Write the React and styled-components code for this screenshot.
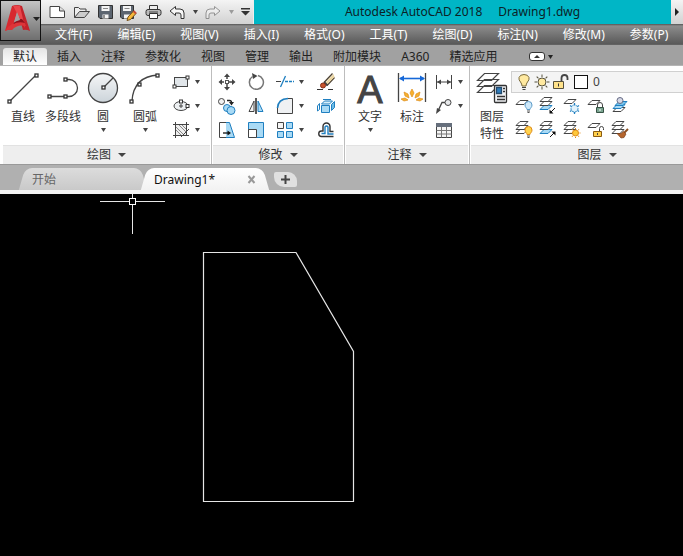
import React, { useState } from 'react';
import styled, { createGlobalStyle } from 'styled-components';

const GlobalStyle = createGlobalStyle`
  * {
    box-sizing: border-box;
  }

  body {
    margin: 0;
    background: #000;
    font-family: "Noto Sans", "Noto Sans CJK SC", sans-serif;
    font-size: 12px;
    line-height: 16px;
    color: #333;
  }

  button, select {
    font: inherit;
    color: inherit;
    background: none;
    border: 0;
    padding: 0;
    margin: 0;
    cursor: pointer;
  }

  svg {
    display: block;
    flex: none;
  }
`

const Container = styled.div`
  min-height: 100vh;
  display: flex;
  flex-direction: column;
  overflow: hidden;
`

const Header = styled.header`
  display: flex;
  height: 45px;
  background: linear-gradient(#555 24px, #8c8c8c 26px, #595959 44px, #6b6b6b);
`

const AppButton = styled.button`
  width: 41px;
  height: 41px;
  flex: none;
  display: flex;
  align-items: center;
  gap: 1px;
  padding: 0 0 4px 3px;
  border: 1px solid #111;
  background: linear-gradient(#c4c4c4, #969696 50%, #6f6f6f);
`

const HeaderRows = styled.div`
  flex: 1;
  min-width: 0;
`

const TopRow = styled.div`
  display: flex;
  height: 24px;
`

const QuickBar = styled.div`
  width: 213px;
  flex: none;
  display: flex;
  align-items: center;
  justify-content: space-between;
  padding: 0 3px 0 8px;
  background: linear-gradient(#f4f4f4, #d2d2d2);
  border-right: 1px solid #eee;
`

const QuickButton = styled.button`
  display: flex;
  align-items: center;
  opacity: ${props => props.$dim ? 0.45 : 1};
`

const TitleBar = styled.h1`
  flex: 1;
  margin: 0;
  display: flex;
  align-items: center;
  justify-content: center;
  gap: 16px;
  font-size: 12px;
  font-weight: normal;
  color: #0c2226;
  white-space: nowrap;
  background: #00b6c6;
`

const TitleArrow = styled.button`
  width: 12px;
  display: flex;
  align-items: center;
  justify-content: center;
  background: linear-gradient(#f4f4f4, #d2d2d2);
`

const MenuBar = styled.nav`
  display: flex;
  align-items: center;
  gap: 25px;
  height: 21px;
  padding-left: 14px;
  overflow: hidden;
`

const MenuItem = styled.button`
  flex: none;
  color: #fff;
  white-space: nowrap;
`

const RibbonTabs = styled.div`
  display: flex;
  align-items: flex-end;
  height: 20px;
  padding-left: 3px;
  background: #a1a1a1;
`

const RibbonTab = styled.button`
  height: 17px;
  padding: 0 10px;
  line-height: 17px;
  white-space: nowrap;
  border-radius: 3px 3px 0 0;
  color: #222;
  background: ${props => props.$active ? 'linear-gradient(#e4e4e4, #fff)' : 'none'};
`

const RibbonToggle = styled.button`
  height: 17px;
  margin-left: 22px;
  display: flex;
  align-items: center;
  gap: 3px;
`

const Ribbon = styled.section`
  display: flex;
  height: 100px;
  padding-left: 2px;
  overflow: hidden;
  background: #fff;
  border-top: 1px solid #b5b5b5;
  border-bottom: 1px solid #999;
`

const Panel = styled.div`
  width: ${props => props.$width}px;
  flex: none;
  display: flex;
  flex-direction: column;
  border-right: 1px solid #bdbdbd;
`

const PanelBody = styled.div`
  flex: 1;
  display: flex;
  align-items: flex-start;
  padding: 4px 0 0 ${props => props.$left}px;
`

const PanelTitle = styled.button`
  height: 19px;
  margin: 0 1px;
  display: flex;
  align-items: center;
  justify-content: center;
  gap: 7px;
  background: #eee;
  border-top: 1px solid #e2e2e2;
`

const BigButton = styled.button`
  width: ${props => props.$width || 40}px;
  display: flex;
  flex-direction: column;
  align-items: center;
  gap: 3px;
  padding-top: 2px;
  line-height: 17px;
  white-space: nowrap;

  span {
    padding-top: 1px;
  }
`

const ToolGrid = styled.div`
  display: grid;
  grid-template-columns: ${props => props.$columns};
  grid-auto-rows: 24px;
  margin-left: ${props => props.$indent || 0}px;
`

const Tool = styled.div`
  display: flex;
  align-items: center;
  gap: 4px;
`

const IconButton = styled.button`
  display: flex;
  align-items: center;
`

const LayerColumn = styled.div`
  flex: 1;
`

const LayerBox = styled.div`
  display: flex;
  align-items: center;
  height: 22px;
  margin: 1px 0;
  padding-left: 3px;
  border: 1px solid #d0d0d0;
  border-right: 0;
  background: #f4f4f4;
`

const Swatch = styled.span`
  width: 14px;
  height: 14px;
  margin: 0 5px 0 4px;
  border: 1px solid #111;
  background: #fff;
`

const LayerSelect = styled.select`
  flex: 1;
  appearance: none;
  outline: none;
  color: #444;
`

const FileTabs = styled.div`
  display: flex;
  align-items: flex-end;
  height: 29px;
  padding: 0 0 4px 22px;
  background: linear-gradient(#b0b0b0 25px, #f2f2f2 25px);
`

const FileTab = styled.div`
  position: relative;
  z-index: ${props => props.$active ? 1 : 0};
  width: 122px;
  height: 22px;
  display: flex;
  align-items: center;
  justify-content: space-between;
  padding: 1px 10px 0 10px;
  color: ${props => props.$active ? '#111' : '#666'};

  &::before, &::after {
    content: "";
    position: absolute;
    z-index: -1;
    top: 0;
    bottom: 0;
    background: ${props => props.$active ? 'linear-gradient(#fff, #f2f2f2)' : 'linear-gradient(#dcdcdc, #c9c9c9)'};
  }

  &::before {
    left: 0;
    right: 40%;
    border-radius: 7px 0 0 0;
    transform: skewX(-16deg);
  }

  &::after {
    left: 40%;
    right: 0;
    border-radius: 0 7px 0 0;
    transform: skewX(16deg);
  }
`

const AddTab = styled.button`
  width: 23px;
  height: 15px;
  margin: 0 0 3px 8px;
  display: flex;
  align-items: center;
  justify-content: center;
  border-radius: 2px 9px 2px 10px;
  background: #e0e0e0;
`

const Workspace = styled.main`
  flex: 1;
  display: flex;
  min-height: 320px;
  background: #000;
`

const Drawing = styled.svg`
  width: 100%;
  height: auto;
`

const INK = '#444';
const BLUE = '#1f7fc0';
const SKY = '#a9daf5';

function Caret({ size = 5, color = '#444' }) {
    return (
        <svg width={size} height="4" viewBox="0 0 6 4" preserveAspectRatio="none">
            <path d="M0 0h6L3 4z" fill={color} />
        </svg>
    )
}

// small square grip with its centre on x, y
function Grip({ x, y }) {
    return <rect x={x - 1.5} y={y - 1.5} width="3" height="3" fill="#fff" stroke="#333" />
}

function Big({ children }) {
    return (
        <svg width="36" height="32" viewBox="0 0 36 32" fill="none" stroke={INK} strokeWidth="1.3">
            {children}
        </svg>
    )
}

function Small({ children }) {
    return (
        <svg width="20" height="20" viewBox="0 0 20 20" fill="none" stroke={INK}>
            {children}
        </svg>
    )
}

// one sheet of the layer stack
function Sheet({ x = 0, y = 0, fill = '#fff', stroke = INK }) {
    return <path d={`M${x + 2} ${y + 4.5}L${x + 6} ${y + 0.5}h8l-4 4z`} fill={fill} stroke={stroke} />
}

function Stack({ bottom = '#fff', bottomStroke = INK }) {
    return (
        <g>
            <Sheet y={9} fill={bottom} stroke={bottomStroke} />
            <Sheet y={5} />
            <Sheet y={1} />
        </g>
    )
}

function Bulb({ x, y, fill, stroke }) {
    return (
        <g transform={`translate(${x} ${y})`}>
            <path d="M-1.500 3.500C-1.500 2-3.500 1.500-3.500-1a3.500 3.500 0 0 1 7 0C3.500 1.500 1.500 2 1.500 3.500z" fill={fill} stroke={stroke} />
            <path d="M-1.500 5h3M-1 6.500h2" stroke="#555" />
        </g>
    )
}

function Sun({ x, y, r, fill, stroke, ray }) {
    const rays = [0, 45, 90, 135, 180, 225, 270, 315];
    return (
        <g transform={`translate(${x} ${y})`} stroke={stroke}>
            {rays.map(a => <path key={a} d={`M0 ${-r - 1}V${-r - ray}`} transform={`rotate(${a})`} />)}
            <circle r={r} fill={fill} />
        </g>
    )
}

const quickIcons = [
    { name: '新建', icon: <svg width="17" height="16" viewBox="0 0 17 16" fill="#fff" stroke="#444"><path d="M1 2.500h9.500l5 4.500v6.500h-14.500z" /><path d="M10.500 2.500V7h5" fill="#ddd" /></svg> },
    { name: '打开', icon: <svg width="17" height="16" viewBox="0 0 17 16" fill="#eee" stroke="#444"><path d="M1.500 13.500v-10h4l1.500 1.500h6v3" /><path d="M1.500 13.500l5-6h10l-5 6z" fill="#ccc" /></svg> },
    { name: '保存', icon: <svg width="15" height="16" viewBox="0 0 15 16" fill="#5c6570" stroke="#333"><path d="M.5 1.500h14v13H2L.5 13z" /><path d="M3.500 2h8v5h-8zM4.500 10.500h6v4h-6z" fill="#f4f4f4" stroke="none" /><path d="M5 4.500h5" stroke="#888" /><path d="M6 11v3" /></svg> },
    { name: '另存为', icon: <svg width="17" height="17" viewBox="0 0 17 17" fill="#5c6570" stroke="#333"><path d="M.5 1.500h13v13H2L.5 13z" /><path d="M3 2h8v5H3zM4 10.500h6v4H4z" fill="#f4f4f4" stroke="none" /><path d="M4.500 4.500h5" stroke="#888" /><path d="M8 13l5.500-6 2.500 2.500-5.500 6-3.500 1z" fill="#f6b83c" stroke="#755018" /><path d="M13.500 7l2.500 2.500" stroke="#c64b38" strokeWidth="2" /></svg> },
    { name: '打印', icon: <svg width="17" height="16" viewBox="0 0 17 16" fill="#eee" stroke="#333"><path d="M4.500 5V1.500h8V5" /><rect x="1" y="5.500" width="15" height="6" rx="2" fill="#bbb" /><path d="M4.500 9.500h8v5h-8z" fill="#fff" /><path d="M4 8h9" stroke="#444" /></svg> },
];

const UndoIcon = () => (
    <svg width="16" height="15" viewBox="0 0 16 15" fill="#f7f7f7" stroke="#333">
        <path d="M1 6l5.500-4.500V4H11q4 0 4 4v5.500h-3V10Q12 8 10 8H6.500v2.500z" />
    </svg>
)

const AppLogo = () => (
    <svg width="28" height="30" viewBox="0 0 28 30">
        <path d="M1 27L8 2h7L8 26q-3-1-7 1z" fill="#d8292f" />
        <path d="M8 2q5-2 10 0l8 25q-4-2-7-1L14 9z" fill="#c2222a" />
        <path d="M9 2q4-1 7 0l5 22-7-13z" fill="#e9464b" />
        <path d="M1 27q6-10 19-10l2 5Q13 20 8 26q-3-1-7 1z" fill="#de3438" />
        <path d="M9 20q6-3 12-1l-3-4q-5 0-9 5z" fill="#8e111c" />
        <path d="M13 8l3 8-6 2z" fill="#a6a0a0" />
    </svg>
)

const drawBig = [
    { name: '直线', icon: <Big><path d="M5 29L31 3" /><Grip x={4.500} y={29.500} /><Grip x={31.500} y={3.500} /></Big> },
    { name: '多段线', icon: <Big><path d="M5 24.500H24A8.500 8.500 0 0 0 24 7.500H20" /><Grip x={4.500} y={24.500} /><Grip x={20.500} y={24.500} /><Grip x={20.500} y={7.500} /></Big> },
    {
        name: '圆', caret: true,
        icon: (
            <Big>
                <defs><linearGradient id="disc" x2="0" y2="1"><stop stopColor="#f5f6f7" /><stop offset="1" stopColor="#ccd4da" /></linearGradient></defs>
                <circle cx="18" cy="16" r="14.500" fill="url(#disc)" /><path d="M18 16L28 6" /><Grip x={18.500} y={15.500} />
            </Big>
        )
    },
    { name: '圆弧', caret: true, width: 44, icon: <Big><path d="M5 29C6 13 15 4 31 3" /><Grip x={4.500} y={29.500} /><Grip x={12.500} y={12.500} /><Grip x={30.500} y={3.500} /></Big> },
];

const drawSmall = [
    { name: '矩形', caret: true, icon: <Small><rect x="3.500" y="5.500" width="13" height="9" fill="#e1e6ea" /><Grip x={3.500} y={14.500} /><Grip x={16.500} y={5.500} /></Small> },
    { name: '椭圆', caret: true, icon: <Small><ellipse cx="10" cy="10" rx="7" ry="4.500" fill="#edf0f2" /><path d="M8 10h4M10 8v4" /><Grip x={10} y={5.500} /><Grip x={16.500} y={10} /></Small> },
    { name: '图案填充', caret: true, icon: <Small><rect x="4.500" y="4.500" width="11" height="11" fill="#eee" /><path d="M2 4.500h16M2 15.500h16M4.500 2v16M15.500 2v12" /><path d="M5 7l8 8M5 10l5 5M8 5l7 7M11 5l4 4" strokeWidth=".6" /><path d="M10 17l8-8" /></Small> },
];

const modifyTools = [
    { name: '移动', icon: <Small><path d="M10 4v4M10 12v4M4 10h4M12 10h4" strokeWidth="1.500" strokeDasharray="3 1" /><path d="M10 1.500l3 3.500H7zM10 18.500l3-3.500H7zM1.500 10L5 7v6zM18.500 10L15 7v6z" fill={INK} stroke="none" /><rect x="8.500" y="8.500" width="3" height="3" fill="#fff" stroke="#555" /></Small> },
    { name: '旋转', icon: <Small><path d="M6.500 4.500A7 7 0 1 0 12 3.500" stroke="#777" strokeWidth="1.500" /><path d="M6 1l5.500 3L7 7z" fill="#444" stroke="none" /></Small> },
    { name: '修剪', caret: true, icon: <Small><path d="M1 9.500h5" /><path d="M10 9.500h9" stroke={BLUE} strokeDasharray="3 1" strokeWidth="1.500" /><path d="M5.500 15l5-11" stroke={BLUE} strokeWidth="1.300" /></Small> },
    { name: '删除', icon: <Small><path d="M1 17.500h6M12 17.500h5" stroke="#333" /><path d="M8 10.500l8.500-9M11 13.500l7.500-8" stroke="#4d4233" strokeWidth="1.300" /><path d="M9 11l8.500-9 1 3-8 8z" fill="#ecd6a2" stroke="none" /><path d="M8 10l3.500 3.500" stroke="#444" strokeWidth="2" /><circle cx="7" cy="13.500" r="2.500" fill="#c8532b" stroke="#863018" /></Small> },
    { name: '复制', icon: <Small><circle cx="4.500" cy="5.500" r="3" fill="#f2f2f2" /><circle cx="10" cy="12" r="3.500" fill={SKY} stroke={BLUE} /><circle cx="14" cy="14.500" r="4" fill={SKY} stroke={BLUE} /><path d="M10 4.500h2.500q2 0 2 2" stroke="#222" strokeWidth="1.300" /><path d="M12 6h5l-2.500 3.500z" fill="#222" stroke="none" /></Small> },
    { name: '镜像', icon: <Small><path d="M8 5v10.500H3z" fill="#f4f4f4" /><path d="M12 5v10.500h5z" fill={SKY} stroke={BLUE} /><path d="M10 2v16" stroke="#222" strokeWidth="1.500" /></Small> },
    { name: '圆角', caret: true, icon: <Small><path d="M2.500 17.500V12Q3 3.500 12 2.500h5.500v15z" fill="#eff1f3" stroke="none" /><path d="M2.500 12v5.500h15v-15H13" /><path d="M2.500 12Q3 3 13 2.500" stroke={BLUE} strokeWidth="1.600" /></Small> },
    { name: '分解', icon: <Small><path d="M5.500 8l3-3h8l-3 3z" fill="#d8f0fb" stroke={BLUE} /><path d="M5.500 9.500h8v7h-8z" fill={SKY} stroke={BLUE} /><path d="M15.500 8.500l3-3v6l-3 3z" fill="#6bbce6" stroke={BLUE} /><path d="M3.500 7.500l-2 2.500v5l2-1.500zM7 3.500h8" stroke={BLUE} /></Small> },
    { name: '拉伸', icon: <Small><path d="M8.500 2.500h4l5 15h-9z" fill={SKY} stroke={BLUE} /><path d="M9 2.500H2.500v15H9" fill="#fff" /><path d="M6 13h6" stroke="#111" strokeWidth="1.300" /><path d="M10.500 10.500L14 13l-3.500 2.500z" fill="#111" stroke="none" /></Small> },
    { name: '缩放', icon: <Small><path d="M2.500 2.500h15v15h-15z" fill={SKY} stroke={BLUE} /><path d="M2.500 9.500h8v8h-8z" fill="#fff" /></Small> },
    { name: '阵列', caret: true, icon: <Small><path d="M2.500 2.500h6v6h-6z" fill="#f4f4f4" /><path d="M11.500 2.500h6v6h-6zM2.500 11.500h6v6h-6zM11.500 11.500h6v6h-6z" fill={SKY} stroke={BLUE} /></Small> },
    { name: '偏移', icon: <Small><path d="M17.500 11.500H14V6.500a3.500 3.500 0 0 0-7 0V11H5.500a2.700 2.700 0 0 0 0 5.500h12" stroke="#333" strokeWidth="1.400" /><path d="M17.500 14H12V7q-1.500-2-3 0v6.500H5.500" stroke={BLUE} strokeWidth="1.400" /></Small> },
];

const noteSmall = [
    { name: '线性', caret: true, icon: <Small><path d="M2.500 3v14M17.500 3v14M3 10h14" /><path d="M3 10l4-2.500v5zM17 10l-4-2.500v5z" fill={INK} stroke="none" /></Small> },
    { name: '引线', caret: true, icon: <Small><path d="M4 15L8 6.500h3" strokeWidth="1.300" /><circle cx="14" cy="6.500" r="3" fill="#e8eaec" /><path d="M2 18l1-6 4 2z" fill={INK} stroke="none" /></Small> },
    { name: '表格', icon: <Small><path d="M2.500 3.500h15v14h-15z" fill="#f5f5f5" /><path d="M2 3h16v4H2z" fill="#666f7c" stroke="none" /><path d="M2.500 10.500h15M2.500 14h15M7.500 7v10.500M12.500 7v10.500" stroke="#777" /></Small> },
];

const layerTools = [
    { name: '关', icon: <Small><Sheet y={4} /><Bulb x={14.500} y={10} fill="#cfe9fa" stroke="#5b9bc8" /></Small> },
    { name: '隔离', icon: <Small><Stack bottom={SKY} bottomStroke={BLUE} /><path d="M17 12l-4 4" stroke="#111" /><path d="M11.500 17.500v-4l4 4z" fill="#111" stroke="none" /></Small> },
    { name: '冻结', icon: <Small><Sheet y={3} /><path d="M12.500 7v11M8 9.500l9 6M17 9.500l-9 6" stroke={BLUE} strokeWidth="1.300" /><circle cx="12.500" cy="12.500" r="3.500" fill="#e2f3fc" stroke={BLUE} strokeDasharray="2 1" /></Small> },
    { name: '锁定', icon: <Small><Sheet y={4} /><path d="M11.500 11V9q0-2.500 2.500-2.500T16.500 9v2" /><path d="M10.500 11.500h7v5h-7z" fill="#7ca591" stroke="#365345" /><path d="M14 13v2" stroke="#fff" /></Small> },
    { name: '置为当前', icon: <Small><Sheet x={1} y={11} fill="#fff" /><Sheet x={1} y={8} fill={SKY} stroke={BLUE} /><Sheet x={3} y={5} fill="#75c3ec" stroke={BLUE} /><circle cx="10" cy="4.500" r="3" fill="#d6d9e6" stroke="#666b85" /></Small> },
    { name: '打开所有图层', icon: <Small><Stack /><Bulb x={14.500} y={11} fill="#ffd34e" stroke="#e08b17" /></Small> },
    { name: '取消隔离', icon: <Small><Stack bottom={SKY} bottomStroke={BLUE} /><path d="M12 17l4-4" stroke="#111" /><path d="M17.500 11.500v4l-4-4z" fill="#111" stroke="none" /></Small> },
    { name: '解冻', icon: <Small><Stack /><Sun x={13.500} y={13} r={3} ray={2} fill="#ffc83a" stroke="#e08b17" /></Small> },
    { name: '解锁', icon: <Small><Sheet y={3} /><path d="M13.500 11V8.500q0-2 2-2t2 2V10" /><path d="M7.500 11.500h8v5h-8z" fill="#ffcf4a" stroke="#8a5a10" /><path d="M11.500 13v2" /></Small> },
    { name: '匹配图层', icon: <Small><Stack /><path d="M14 13l4-4" stroke="#8c4f20" strokeWidth="2" /><path d="M7 13.500h4l2.500-2 2.500 2.500-2 3.500-3 .5z" fill="#b5652c" stroke="#7c421b" strokeWidth=".7" /></Small> },
];

const menus = ['文件(F)', '编辑(E)', '视图(V)', '插入(I)', '格式(O)', '工具(T)', '绘图(D)', '标注(N)', '修改(M)', '参数(P)'];
const ribbonTabs = ['默认', '插入', '注释', '参数化', '视图', '管理', '输出', '附加模块', 'A360', '精选应用'];

function ToolItem({ tool }) {
    return (
        <Tool>
            <IconButton aria-label={tool.name}>{tool.icon}</IconButton>
            {tool.caret && <IconButton aria-label={tool.name + '选项'}><Caret /></IconButton>}
        </Tool>
    )
}

function BigTool({ tool }) {
    return (
        <BigButton $width={tool.width}>
            {tool.icon}
            <span>{tool.name}</span>
            {tool.caret && <Caret />}
        </BigButton>
    )
}

function RibbonPanel({ title, width, left = 1, children }) {
    return (
        <Panel $width={width}>
            <PanelBody $left={left}>{children}</PanelBody>
            <PanelTitle>{title}<Caret size={8} /></PanelTitle>
        </Panel>
    )
}

export default function App(){
    const [activeTab, setActiveTab] = useState('默认');

    return(
        <Container>
            <GlobalStyle />
            <Header>
                <AppButton aria-label="应用程序菜单">
                    <AppLogo />
                    <Caret size={7} color="#222" />
                </AppButton>
                <HeaderRows>
                    <TopRow>
                        <QuickBar>
                            {quickIcons.map(item => <QuickButton key={item.name} aria-label={item.name}>{item.icon}</QuickButton>)}
                            <QuickButton aria-label="放弃"><UndoIcon /></QuickButton>
                            <QuickButton aria-label="放弃选项"><Caret /></QuickButton>
                            <QuickButton aria-label="重做" $dim><svg width="16" height="15" viewBox="0 0 16 15"><g transform="matrix(-1 0 0 1 16 0)"><UndoIcon /></g></svg></QuickButton>
                            <QuickButton aria-label="重做选项" $dim><Caret /></QuickButton>
                            <QuickButton aria-label="自定义"><svg width="9" height="8" viewBox="0 0 9 8"><path d="M0 0h9v1.500H0zM0 3h9L4.500 7.500z" fill="#333" /></svg></QuickButton>
                        </QuickBar>
                        <TitleBar>
                            <span>Autodesk AutoCAD 2018</span>
                            <span>Drawing1.dwg</span>
                        </TitleBar>
                        <TitleArrow aria-label="展开"><svg width="4" height="8" viewBox="0 0 4 8"><path d="M0 0l4 4-4 4z" fill="#222" /></svg></TitleArrow>
                    </TopRow>
                    <MenuBar>
                        {menus.map(menu => <MenuItem key={menu}>{menu}</MenuItem>)}
                    </MenuBar>
                </HeaderRows>
            </Header>

            <RibbonTabs>
                {ribbonTabs.map(tab => (
                    <RibbonTab key={tab} $active={tab === activeTab} onClick={() => setActiveTab(tab)}>{tab}</RibbonTab>
                ))}
                <RibbonToggle aria-label="最小化功能区">
                    <svg width="16" height="9" viewBox="0 0 16 9"><rect x=".5" y=".5" width="15" height="8" rx="2.500" fill="#fff" stroke="#333" /><path d="M5 6l3-3 3 3z" fill="#333" /></svg>
                    <Caret color="#222" />
                </RibbonToggle>
            </RibbonTabs>

            <Ribbon>
                <RibbonPanel title="绘图" width={210}>
                    {drawBig.map(tool => <BigTool key={tool.name} tool={tool} />)}
                    <ToolGrid $columns="36px" $indent={4}>
                        {drawSmall.map(tool => <ToolItem key={tool.name} tool={tool} />)}
                    </ToolGrid>
                </RibbonPanel>

                <RibbonPanel title="修改" width={133} left={5}>
                    <ToolGrid $columns="29px 29px 41px 20px">
                        {modifyTools.map(tool => <ToolItem key={tool.name} tool={tool} />)}
                    </ToolGrid>
                </RibbonPanel>

                <RibbonPanel title="注释" width={125} left={5}>
                    <BigButton>
                        <Big>
                            <text x="18" y="31" textAnchor="middle" fontFamily="Liberation Sans, sans-serif" fontSize="38" fill={INK} strokeWidth="1" aria-hidden="true">A</text>
                        </Big>
                        <span>文字</span>
                        <Caret />
                    </BigButton>
                    <BigButton $width={44}>
                        <Big>
                            <path d="M4.500 1v29M31.500 1v29" />
                            <path d="M6 6.500h24" stroke="#1668d8" strokeWidth="1.600" />
                            <path d="M5 6.500l5-3v6zM31 6.500l-5-3v6z" fill="#1668d8" stroke="none" />
                            <path d="M18 17l2 4-2 4-2-4zM10 20l4 2 1 4-4-2zM26 20l-4 2-1 4 4-2zM7 27l4-1 3 2-4 1zM29 27l-4-1-3 2 4 1z" fill="#f8b22c" stroke="#dc8c1c" strokeWidth=".7" />
                        </Big>
                        <span>标注</span>
                    </BigButton>
                    <ToolGrid $columns="34px">
                        {noteSmall.map(tool => <ToolItem key={tool.name} tool={tool} />)}
                    </ToolGrid>
                </RibbonPanel>

                <RibbonPanel title="图层" width={255} left={3}>
                    <BigButton $width={38}>
                        <Big>
                            <path d="M3.500 20.500l7-7h14l-7 7zM3.500 14.500l7-7h14l-7 7zM3.500 8.500l7-7h14l-7 7z" fill="#fff" strokeWidth="1.200" />
                            <rect x="20.500" y="13.500" width="12" height="17" rx="1" fill="#f3f5f7" stroke="#333" />
                            <path d="M22.500 15.500h5v6h-5z" fill="#2f7dbc" stroke="#244c70" />
                            <path d="M29 16.500h2M29 19.500h2M23 24.500h8M23 27.500h8" stroke="#333" />
                        </Big>
                        <span>图层<br />特性</span>
                    </BigButton>
                    <LayerColumn>
                        <LayerBox>
                            <IconButton aria-label="开关图层"><svg width="18" height="20" viewBox="0 0 18 20" fill="none"><path d="M7 14q0-2-1.500-4Q3.500 8 4 5.500 5 2.500 9 2.500t5 3q.5 2.500-1.500 4.500Q11 12 11 14z" fill="#ffe9a0" stroke="#7a6a3c" /><path d="M7 15.500h4M7.500 17.500h3" stroke="#444" /></svg></IconButton>
                            <IconButton aria-label="冻结图层"><svg width="18" height="18" viewBox="0 0 18 18" fill="none"><Sun x={9} y={9} r={4} ray={3.500} fill="#ffe9a0" stroke="#55503c" /></svg></IconButton>
                            <IconButton aria-label="锁定图层"><svg width="19" height="18" viewBox="0 0 19 18" fill="none"><path d="M10.500 8V5q0-3 3-3t3 3v2" stroke="#444" strokeWidth="1.800" /><path d="M2.500 8.500h10v7h-10z" fill="#ffe28a" stroke="#55503c" /><path d="M7.500 10.500v3" stroke="#333" /></svg></IconButton>
                            <Swatch />
                            <LayerSelect aria-label="图层">
                                <option>0</option>
                            </LayerSelect>
                        </LayerBox>
                        <ToolGrid $columns="repeat(5, 24px)" $indent={3}>
                            {layerTools.map(tool => <ToolItem key={tool.name} tool={tool} />)}
                        </ToolGrid>
                    </LayerColumn>
                </RibbonPanel>
            </Ribbon>

            <FileTabs>
                <FileTab><span>开始</span></FileTab>
                <FileTab $active>
                    <span>Drawing1*</span>
                    <IconButton aria-label="关闭"><svg width="9" height="9" viewBox="0 0 9 9"><path d="M1.500 1l6 7M7.500 1l-6 7" stroke="#999" strokeWidth="2" /></svg></IconButton>
                </FileTab>
                <AddTab aria-label="新图形"><svg width="9" height="9" viewBox="0 0 9 9"><path d="M4.500 0v9M0 4.500h9" stroke="#444" strokeWidth="2" /></svg></AddTab>
            </FileTabs>

            <Workspace>
                <Drawing role="img" aria-label="图形" fill="none" stroke="#e6e6e6">
                    <path d="M203.500 58.500h92.500L353.500 157.500v150h-150z" strokeWidth="1.200" />
                    <path d="M100 7.500h29M136 7.500h29M132.500 0v4M132.500 11v29" />
                    <rect x="129.500" y="4.500" width="6" height="6" stroke="#fff" />
                </Drawing>
            </Workspace>
        </Container>
    )
}
